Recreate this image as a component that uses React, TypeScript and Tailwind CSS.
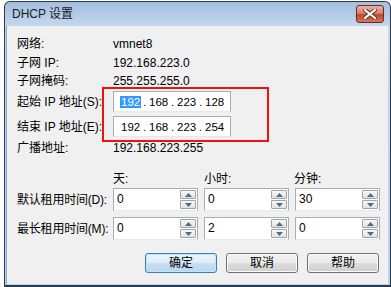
import React from 'react';

const font = "font-['Liberation_Sans','Noto_Sans_CJK_SC',sans-serif]";

const Arrow = ({ up }: { up?: boolean }) => (
  <svg width="7" height="4" viewBox="0 0 7 4">
    <path d={up ? 'M0 4 L3.5 0 L7 4 Z' : 'M0 0 L3.5 4 L7 0 Z'} fill="#4d6a94" />
  </svg>
);

const SpinBtn = ({ up }: { up?: boolean }) => (
  <div className="flex flex-1 items-center justify-center rounded-[1px] border border-[#a3a3a3] bg-[linear-gradient(#f8f8f8,#e2e2e2)]">
    <Arrow up={up} />
  </div>
);

const SpinBox = ({ value }: { value: string }) => (
  <div className="flex h-[23px] w-[85px] border border-[#abadb3] border-b-[#e3e9ef] bg-white">
    <div className="flex-1 pl-[3px] pt-[3px] text-[12px] leading-[14px]">{value}</div>
    <div className="flex w-[17px] flex-col gap-[1px] py-[1px] pr-[1px]">
      <SpinBtn up />
      <SpinBtn />
    </div>
  </div>
);

const IpBox = ({ parts, selected }: { parts: string[]; selected?: boolean }) => (
  <div className="flex h-[21px] items-center border border-[#abadb3] border-b-[#e3e9ef] bg-white pl-[6px] text-[11.5px] leading-[12px] w-[118px]">
    {parts.map((p, i) => (
      <React.Fragment key={i}>
        <span className="w-[21px] shrink-0">
          <span className={selected && i === 0 ? 'bg-[#3399ff] px-[1px] text-white' : 'px-[1px]'}>{p}</span>
        </span>
        {i < 3 && <span className="w-[7px] shrink-0 text-center">.</span>}
      </React.Fragment>
    ))}
  </div>
);

const InfoRow = ({ label, value, className = '' }: { label: string; value: string; className?: string }) => (
  <div className={`flex h-[18px] items-center ${className}`}>
    <div className="w-[96px]">{label}</div>
    <div>{value}</div>
  </div>
);

const Button = ({ label, primary }: { label: string; primary?: boolean }) => (
  <button
    className={
      primary
        ? 'h-[20px] w-[72px] rounded-[3px] border border-[#3c7fb1] bg-[linear-gradient(#eaf5fc_0%,#dcecf7_50%,#c9e0f0_50%,#b9d6ec_100%)] shadow-[inset_0_0_0_1px_#bfe6fb] text-[12px] leading-[18px]'
        : 'h-[20px] w-[72px] rounded-[3px] border border-[#707070] bg-[linear-gradient(#f2f2f2_0%,#ebebeb_50%,#dddddd_50%,#cfcfcf_100%)] shadow-[inset_0_0_0_1px_#fbfbfb] text-[12px] leading-[18px]'
    }
  >
    {label}
  </button>
);

export default function App() {
  return (
    <div className={`h-[287px] w-[391px] overflow-hidden bg-white pl-[4px] pt-[1px] text-black ${font}`}>
      <div className="flex h-[286px] w-[387px] flex-col rounded-t-[6px] border border-b-2 border-[#2b3a4e] bg-[linear-gradient(#a3bedf,#c3d8ee_24px,#b6d3ef)]">
        {/* title bar */}
        <div className="flex h-[24px] items-center justify-between pl-[7px] pr-[6px]">
          <span className="text-[12px] leading-[14px] text-[#1a1a1a]">DHCP 设置</span>
          <div className="flex h-[18px] w-[28px] items-center justify-center rounded-[3px] border border-[#6e2b22] bg-[linear-gradient(#e9b2a4_0%,#d9826c_45%,#c0462f_55%,#d5775c_100%)]">
            <svg width="14" height="10" viewBox="0 0 14 10">
              <path d="M2 1 L12 9 M12 1 L2 9" stroke="#5a2a24" strokeWidth="4" strokeLinecap="square" />
              <path d="M2 1 L12 9 M12 1 L2 9" stroke="#ffffff" strokeWidth="2.2" strokeLinecap="square" />
            </svg>
          </div>
        </div>

        {/* content */}
        <div className="relative ml-[1px] mr-[2px] mb-[1px] flex-1 border-l border-[#8ea9c9] bg-[#f0f0f0] pl-[10px] text-[12px] leading-[14px]">
          <div className="pt-[9px]">
            <InfoRow label="网络:" value="vmnet8" />
            <InfoRow label="子网 IP:" value="192.168.223.0" className="mt-[1px]" />
            <InfoRow label="子网掩码:" value="255.255.255.0" />
          </div>

          <div className="mt-[1px] flex h-[21px] items-center">
            <div className="w-[96px]">起始 IP 地址(S):</div>
            <IpBox parts={['192', '168', '223', '128']} selected />
          </div>
          <div className="mt-[4px] flex h-[21px] items-center">
            <div className="w-[96px]">结束 IP 地址(E):</div>
            <IpBox parts={['192', '168', '223', '254']} />
          </div>

          <InfoRow label="广播地址:" value="192.168.223.255" className="mt-[2px]" />

          <div className="mt-[13px] flex h-[18px] items-center pl-[96px]">
            <div className="w-[91px]">天:</div>
            <div className="w-[90px]">小时:</div>
            <div>分钟:</div>
          </div>

          <div className="flex h-[23px] items-center">
            <div className="w-[96px] tracking-[-0.2px]">默认租用时间(D):</div>
            <div className="flex gap-[6px]">
              <SpinBox value="0" />
              <SpinBox value="0" />
              <SpinBox value="30" />
            </div>
          </div>
          <div className="mt-[6px] flex h-[23px] items-center">
            <div className="w-[96px] tracking-[-0.2px]">最长租用时间(M):</div>
            <div className="flex gap-[6px]">
              <SpinBox value="0" />
              <SpinBox value="2" />
              <SpinBox value="0" />
            </div>
          </div>

          <div className="mt-[13px] flex justify-end gap-[9px] pr-[9px]">
            <Button label="确定" primary />
            <Button label="取消" />
            <Button label="帮助" />
          </div>

          {/* red annotation box */}
          <div className="absolute left-[95px] top-[61px] h-[55px] w-[167px] border-2 border-[#ee1111]" />
        </div>
      </div>
    </div>
  );
}
